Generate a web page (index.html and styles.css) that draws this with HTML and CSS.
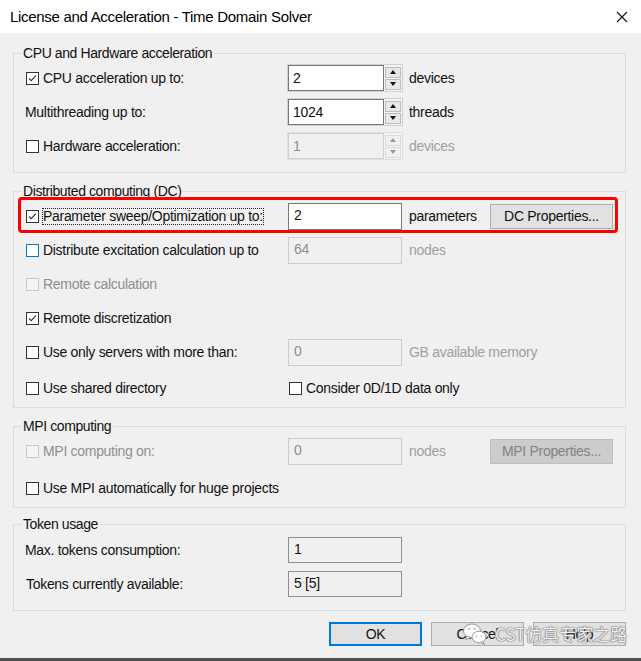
FILE: index.html
```html
<!DOCTYPE html>
<html>
<head>
<meta charset="utf-8">
<link rel="stylesheet" href="styles.css">
</head>
<body>
<div class="window">
  <div class="titlebar">
    <span class="title">License and Acceleration - Time Domain Solver</span>
    <svg class="close" width="12" height="12" viewBox="0 0 12 12"><path d="M1 1 L11 11 M11 1 L1 11" stroke="#111" stroke-width="1.1" fill="none"/></svg>
  </div>
  <div class="content">
    <fieldset class="group g1">
      <legend>CPU and Hardware acceleration</legend>
      <div class="row">
        <label class="lbl"><span class="cb checked"><svg viewBox="0 0 13 13"><polyline points="2.5,6.5 5,9 10.5,3" fill="none" stroke="#333" stroke-width="1.3"/></svg></span>CPU acceleration up to:</label>
        <div class="spin"><div class="field">2</div><div class="arrows"><span class="arr up"></span><span class="arr down"></span></div></div>
        <span class="unit">devices</span>
      </div>
      <div class="row">
        <label class="lbl plain">Multithreading up to:</label>
        <div class="spin"><div class="field">1024</div><div class="arrows"><span class="arr up"></span><span class="arr down"></span></div></div>
        <span class="unit">threads</span>
      </div>
      <div class="row">
        <label class="lbl"><span class="cb"></span>Hardware acceleration:</label>
        <div class="spin disabled"><div class="field">1</div><div class="arrows"><span class="arr up"></span><span class="arr down"></span></div></div>
        <span class="unit dis">devices</span>
      </div>
    </fieldset>

    <fieldset class="group g2">
      <legend>Distributed computing (DC)</legend>
      <div class="row highlighted">
        <label class="lbl"><span class="cb checked"><svg viewBox="0 0 13 13"><polyline points="2.5,6.5 5,9 10.5,3" fill="none" stroke="#333" stroke-width="1.3"/></svg></span><span class="focus">Parameter sweep/Optimization up to:</span></label>
        <div class="input">2</div>
        <span class="unit">parameters</span>
        <button class="btn">DC Properties...</button>
      </div>
      <div class="row">
        <label class="lbl"><span class="cb hover"></span>Distribute excitation calculation up to</label>
        <div class="input disabled">64</div>
        <span class="unit dis">nodes</span>
      </div>
      <div class="row">
        <label class="lbl dis"><span class="cb disabled"></span>Remote calculation</label>
      </div>
      <div class="row">
        <label class="lbl"><span class="cb checked"><svg viewBox="0 0 13 13"><polyline points="2.5,6.5 5,9 10.5,3" fill="none" stroke="#333" stroke-width="1.3"/></svg></span>Remote discretization</label>
      </div>
      <div class="row">
        <label class="lbl"><span class="cb"></span>Use only servers with more than:</label>
        <div class="input disabled">0</div>
        <span class="unit dis wide">GB available memory</span>
      </div>
      <div class="row last">
        <label class="lbl"><span class="cb"></span>Use shared directory</label>
        <label class="lbl span2"><span class="cb"></span>Consider 0D/1D data only</label>
      </div>
    </fieldset>

    <fieldset class="group g3">
      <legend>MPI computing</legend>
      <div class="row">
        <label class="lbl dis"><span class="cb disabled"></span>MPI computing on:</label>
        <div class="input disabled">0</div>
        <span class="unit dis">nodes</span>
        <button class="btn disabled">MPI Properties...</button>
      </div>
      <div class="row second">
        <label class="lbl wide"><span class="cb"></span>Use MPI automatically for huge projects</label>
      </div>
    </fieldset>

    <fieldset class="group g4">
      <legend>Token usage</legend>
      <div class="row">
        <label class="lbl plain">Max. tokens consumption:</label>
        <div class="input readonly">1</div>
      </div>
      <div class="row">
        <label class="lbl">Tokens currently available:</label>
        <div class="input readonly">5 [5]</div>
      </div>
    </fieldset>

    <div class="buttons">
      <button class="btn dlg default">OK</button>
      <button class="btn dlg">Cancel</button>
      <button class="btn dlg">Help</button>
    </div>
  </div>
  <div class="edge"></div>
</div>
<div class="watermark">
  <svg width="26" height="24" viewBox="0 0 26 24">
    <ellipse cx="10" cy="9" rx="8.5" ry="7" fill="#fff" stroke="#9a9a9a" stroke-width="1"/>
    <path d="M5 14 L4 18 L8.5 15.5 Z" fill="#fff" stroke="#9a9a9a" stroke-width="1"/>
    <ellipse cx="17" cy="15" rx="7" ry="5.8" fill="#fff" stroke="#9a9a9a" stroke-width="1"/>
    <path d="M21 19.5 L22.5 22.5 L18.5 20.5 Z" fill="#fff" stroke="#9a9a9a" stroke-width="1"/>
    <circle cx="7" cy="7" r="1" fill="#aaa"/>
    <circle cx="12.5" cy="7" r="1" fill="#aaa"/>
    <circle cx="14.5" cy="14" r="0.8" fill="#aaa"/>
    <circle cx="19.5" cy="14" r="0.8" fill="#aaa"/>
  </svg>
  <span class="wm-text">CST仿真专家之路</span>
</div>
</body>
</html>
```

FILE: styles.css
```css
* { box-sizing: border-box; }
html, body {
  margin: 0;
  padding: 0;
  background: #f0f0f0;
}
body {
  font-family: "Liberation Sans", Arial, sans-serif;
  font-size: 14px;
  letter-spacing: -0.3px;
  color: #111;
  width: 641px;
  height: 661px;
  overflow: hidden;
}
.window {
  display: flex;
  flex-direction: column;
  height: 661px;
}
.titlebar {
  height: 33px;
  background: #fff;
  display: flex;
  align-items: center;
  justify-content: space-between;
  padding: 0 13px 0 10px;
  flex: none;
}
.title {
  font-size: 15px;
  color: #000;
}
.close { display: block; }
.content {
  flex: 1;
  padding-top: 12px;
}
.edge {
  height: 3px;
  background: #505050;
  flex: none;
}
.group {
  margin: 0 15px 0 13px;
  border: 1px solid #dcdcdc;
  padding: 0 0 0 12px;
  min-width: 0;
}
.group legend {
  padding: 0 2px;
  margin-left: -5px;
  line-height: 16px;
  height: 16px;
  letter-spacing: -0.4px;
}
.g1 { padding-bottom: 9px; }
.g2 { margin-top: 10px; padding-bottom: 2px; }
.g3 { margin-top: 10px; padding-bottom: 2px; }
.g4 { margin-top: 8px; padding-top: 1px; padding-bottom: 9px; }

.row {
  display: grid;
  grid-template-columns: 262px 115px 87px 123px;
  align-items: center;
  height: 34px;
  white-space: nowrap;
}
.g2 .row.last { margin-top: 2px; }
.g3 .row.second { margin-top: 3px; }

.lbl {
  display: flex;
  align-items: center;
  gap: 4px;
  grid-column: 1;
}
.lbl.plain { margin-left: -1px; }
.lbl.wide { grid-column: 1 / span 3; }
.lbl.span2 { grid-column: 2 / span 3; margin-left: 1px; }
.lbl.dis { color: #8f8f8f; }

.cb {
  width: 13px;
  height: 13px;
  border: 1px solid #333;
  background: #fff;
  flex: none;
  display: block;
}
.cb svg { display: block; width: 11px; height: 11px; }
.cb.hover { border-color: #0078d7; }
.cb.disabled { border-color: #c8c8c8; background: #f5f5f5; }

.focus {
  outline: 1px dotted #222;
  outline-offset: 0;
  line-height: 15px;
}

.highlighted { position: relative; }
.highlighted::after {
  content: "";
  position: absolute;
  left: -8px;
  right: 7px;
  top: -2px;
  bottom: 0;
  border: 3px solid #f00;
  border-radius: 4px;
  pointer-events: none;
}

.spin {
  grid-column: 2;
  display: flex;
  height: 28px;
  margin-left: -1px;
  border: 1px solid #cfcfcf;
  background: #f4f4f4;
}
.spin .field {
  flex: 1;
  background: #fff;
  border: 1px solid #7a7a7a;
  padding: 4px 0 0 4px;
  margin: 0;
}
.spin .arrows {
  width: 18px;
  display: flex;
  flex-direction: column;
  justify-content: center;
  gap: 1px;
  padding: 0 1px;
}
.arr {
  height: 11px;
  border: 1px solid #bdbdbd;
  background: #e8e8e8;
  display: flex;
  align-items: center;
  justify-content: center;
}
.arr::before {
  content: "";
  width: 0;
  height: 0;
  border-left: 3.5px solid transparent;
  border-right: 3.5px solid transparent;
}
.arr.up::before { border-bottom: 4px solid #111; }
.arr.down::before { border-top: 4px solid #111; }
.spin.disabled { border-color: #dedede; }
.spin.disabled .field { background: #f0f0f0; border-color: #cfcfcf; color: #8f8f8f; }
.spin.disabled .arr { background: #f0f0f0; border-color: #dadada; }
.spin.disabled .arr.up::before { border-bottom-color: #999; }
.spin.disabled .arr.down::before { border-top-color: #999; }

.input {
  grid-column: 2;
  height: 27px;
  width: 114px;
  background: #fff;
  border: 1px solid #7a7a7a;
  padding: 3px 0 0 5px;
}
.input.disabled {
  background: #f0f0f0;
  border-color: #cccccc;
  color: #8f8f8f;
}
.input.readonly {
  background: #f0f0f0;
  border-color: #8f8f8f;
  height: 26px;
}

.unit {
  grid-column: 3;
  padding-left: 6px;
}
.unit.dis { color: #a0a0a0; }
.unit.wide { grid-column: 3 / span 2; }

.btn {
  font-family: inherit;
  font-size: 14px;
  letter-spacing: -0.3px;
  color: #111;
  background: #e1e1e1;
  border: 1px solid #adadad;
  height: 25px;
  padding: 0;
  margin: 0;
  grid-column: 4;
  width: 123px;
}
.btn.disabled {
  background: #cccccc;
  border-color: #bfbfbf;
  color: #838383;
}

.buttons {
  display: flex;
  justify-content: flex-end;
  gap: 9px;
  margin: 11px 15px 0 0;
}
.btn.dlg {
  width: 93px;
  height: 24px;
}
.btn.default {
  border: 2px solid #0078d7;
}

.watermark {
  position: absolute;
  left: 462px;
  top: 621px;
  display: flex;
  align-items: center;
  gap: 7px;
}
.watermark svg { display: block; }
.wm-text {
  font-family: "Noto Sans CJK SC", sans-serif;
  font-size: 17px;
  letter-spacing: 0;
  color: rgba(255, 255, 255, 0.92);
  text-shadow: 0 0 1px #666, 0 0 1px #666, 0 0 2px #999;
}
```
